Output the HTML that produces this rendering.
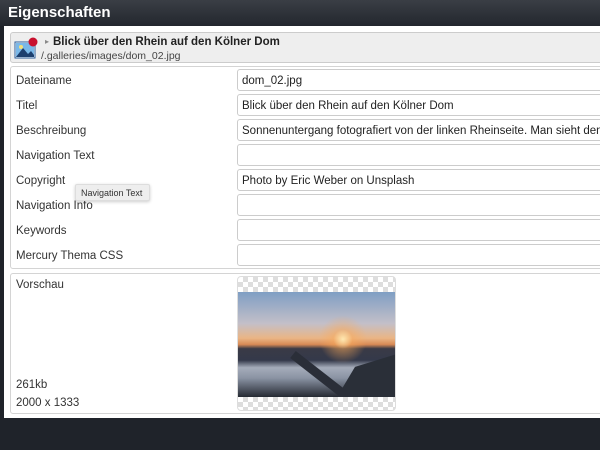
<!DOCTYPE html>
<html><head><style>
*{margin:0;padding:0;box-sizing:border-box}
body{width:600px;height:450px;overflow:hidden;background:#1f232a;font-family:"Liberation Sans","DejaVu Sans",sans-serif;position:relative}
.title{position:absolute;left:0;top:0;width:600px;height:26px;background:linear-gradient(#3a3e45,#23272e);color:#fff;font-size:15px;font-weight:bold;padding:4px 0 0 8px}
.body{position:absolute;left:4px;top:26px;width:596px;height:392px;background:#fff}
.hdr{position:absolute;left:10px;top:32px;width:600px;height:31px;background:#eee;border:1px solid #ccc;border-radius:3px}
.hdr .t{position:absolute;left:42px;top:3px;font-size:11.5px;font-weight:bold;color:#222}
.hdr .p{position:absolute;left:30px;top:17px;font-size:10.5px;color:#444}
.box{position:absolute;left:10px;width:600px;border:1px solid #d4d4d4;border-radius:3px}
.lbl{position:absolute;left:16px;font-size:11.5px;color:#333}
.inp{position:absolute;left:237px;width:380px;height:22px;border:1px solid #ccc;border-radius:3px;font-size:11.5px;color:#222;padding:5px 0 0 4px;white-space:nowrap;overflow:hidden}
.tip{position:absolute;left:75px;top:184px;width:75px;height:17px;background:#eee;border:1px solid #ddd;border-radius:2px;font-size:9px;color:#333;padding:3px 0 0 5px;box-shadow:0 1px 3px rgba(0,0,0,.2)}
.chk{position:absolute;left:237px;top:276px;width:159px;height:135px;border-radius:4px;background-color:#fff;background-image:linear-gradient(45deg,#ddd 25%,transparent 25%,transparent 75%,#ddd 75%),linear-gradient(45deg,#ddd 25%,transparent 25%,transparent 75%,#ddd 75%);background-size:10px 10px;background-position:0 0,5px 5px;border:1px solid #ddd;overflow:hidden}
.ph{position:absolute;left:0;top:15px;width:159px;height:105px;overflow:hidden;background:radial-gradient(circle at 66% 45%,rgba(255,235,180,.95) 0,rgba(250,170,90,.5) 8%,rgba(0,0,0,0) 20%),linear-gradient(#7f9ec4 0%,#c3bfc8 30%,#eab585 44%,#d88a55 50%,#3a3a46 54%,#34394a 65%,#a5acba 72%,#8a93a3 82%,#262a33 100%)}
.br{position:absolute;left:55px;top:58px;width:85px;height:9px;background:#2a2e38;transform:rotate(38deg);transform-origin:left}
.rc{position:absolute;right:0;top:62px;width:60px;height:43px;background:#2a2f38;clip-path:polygon(30% 30%,100% 0,100% 100%,0 100%)}
</style></head><body>
<div class="title">Eigenschaften</div>
<div class="body"></div>
<div class="hdr">
<svg style="position:absolute;left:3px;top:4px" width="24" height="24"><rect x="1" y="5" width="20" height="16" fill="#fff" stroke="#2a5c9a"/><rect x="2" y="6" width="18" height="14" fill="#7ab8e8"/><path d="M2 20 L9 11 L14 17 L17 14 L20 18 V20Z" fill="#1d3f6e"/><circle cx="7" cy="10" r="2" fill="#f4e07a"/><circle cx="19" cy="5" r="4.5" fill="#c8102e"/></svg>
<span style="position:absolute;left:34px;top:4px;font-size:8px;color:#888">▸</span>
<div class="t">Blick über den Rhein auf den Kölner Dom</div>
<div class="p">/.galleries/images/dom_02.jpg</div>
</div>
<div class="box" style="top:66px;height:203px"></div>
<div class="lbl" style="top:75px">Dateiname</div><div class="inp" style="top:69px">dom_02.jpg</div>
<div class="lbl" style="top:100px">Titel</div><div class="inp" style="top:94px">Blick über den Rhein auf den Kölner Dom</div>
<div class="lbl" style="top:125px">Beschreibung</div><div class="inp" style="top:119px">Sonnenuntergang fotografiert von der linken Rheinseite. Man sieht den</div>
<div class="lbl" style="top:150px">Navigation Text</div><div class="inp" style="top:144px"></div>
<div class="lbl" style="top:175px">Copyright</div><div class="inp" style="top:169px">Photo by Eric Weber on Unsplash</div>
<div class="lbl" style="top:200px">Navigation Info</div><div class="inp" style="top:194px"></div>
<div class="lbl" style="top:225px">Keywords</div><div class="inp" style="top:219px"></div>
<div class="lbl" style="top:250px">Mercury Thema CSS</div><div class="inp" style="top:244px"></div>
<div class="tip">Navigation Text</div>
<div class="box" style="top:273px;height:141px"></div>
<div class="lbl" style="top:279px">Vorschau</div>
<div class="lbl" style="top:379px">261kb</div>
<div class="lbl" style="top:397px">2000 x 1333</div>
<div class="chk"><div class="ph"><div class="rc"></div><div class="br"></div></div></div>
</body></html>
